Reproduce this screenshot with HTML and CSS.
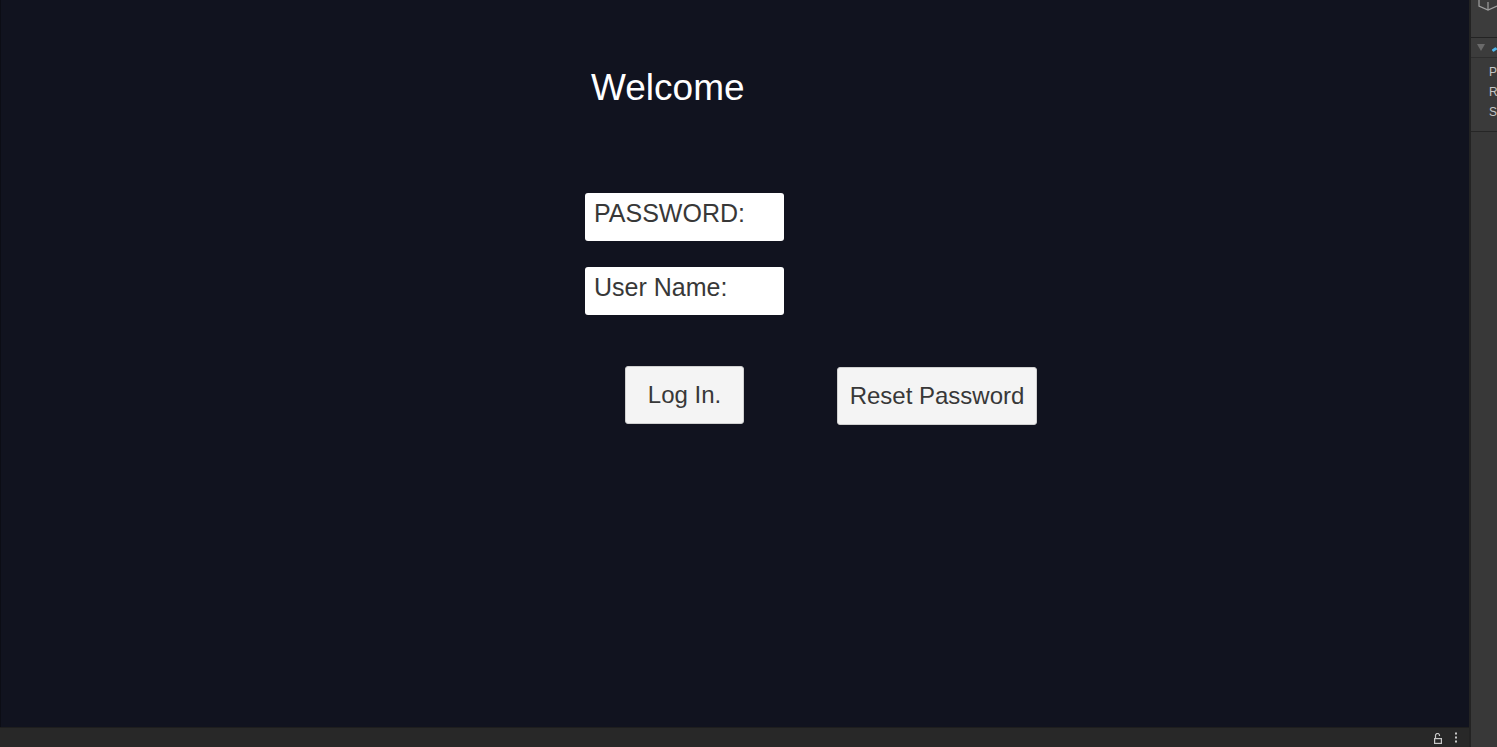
FILE: index.html
```html
<!DOCTYPE html>
<html lang="en">
<head>
<meta charset="utf-8">
<title>Login</title>
<link rel="stylesheet" href="styles.css">
</head>
<body>
<div class="app">
  <div class="workspace">
    <main class="scene">
      <div class="form">
        <h1 class="title">Welcome</h1>
        <div class="field field-first">PASSWORD:</div>
        <div class="field">User Name:</div>
        <div class="actions">
          <button class="btn btn-login">Log In.</button>
          <button class="btn btn-reset">Reset Password</button>
        </div>
      </div>
    </main>
    <footer class="statusbar">
      <svg class="lock" width="8" height="11" viewBox="0 0 8 11"><path d="M1.5 5.5 V2.5 A2 2 0 0 1 5.5 2.5 V3" fill="none" stroke="#c8c8c8" stroke-width="1.2"/><rect x="0.6" y="5.6" width="6.8" height="4.8" fill="none" stroke="#c8c8c8" stroke-width="1.2"/></svg>
      <svg class="dots" width="4" height="11" viewBox="0 0 4 11"><rect x="1" y="0.5" width="2" height="2" fill="#c8c8c8"/><rect x="1" y="4.5" width="2" height="2" fill="#c8c8c8"/><rect x="1" y="8.5" width="2" height="2" fill="#c8c8c8"/></svg>
    </footer>
  </div>
  <div class="divider"></div>
  <aside class="inspector">
    <div class="insp-head">
      <svg class="cube" width="30" height="12" viewBox="0 0 30 12"><path d="M8 -4 V6 L17 10 L26 6" fill="none" stroke="#a0a0a0" stroke-width="1.2"/><path d="M17 10 V2" fill="none" stroke="#a0a0a0" stroke-width="1.2"/></svg>
    </div>
    <div class="insp-component">
      <span class="tri"></span>
      <span class="comp-icon"></span>
    </div>
    <div class="insp-rows">
      <div class="row">P</div>
      <div class="row">R</div>
      <div class="row">S</div>
    </div>
    <div class="insp-rest"></div>
  </aside>
</div>
</body>
</html>
```

FILE: styles.css
```css
html, body {
  margin: 0;
  padding: 0;
  width: 1497px;
  height: 747px;
  overflow: hidden;
  background: #383838;
}

.app {
  display: flex;
  width: 1497px;
  height: 747px;
}

.workspace {
  width: 1469px;
  display: flex;
  flex-direction: column;
}

.scene {
  flex: 1;
  background: #11131f;
  border-left: 1px solid #0c0d15;
  box-sizing: border-box;
}

.form {
  padding-left: 584px;
  padding-top: 67px;
  display: flex;
  flex-direction: column;
  align-items: flex-start;
  font-family: "Liberation Sans", Arial, sans-serif;
}

.title {
  margin: 0 0 0 6px;
  font-size: 37px;
  line-height: 42px;
  font-weight: normal;
  color: #ffffff;
}

.field {
  width: 199px;
  height: 48px;
  box-sizing: border-box;
  background: #ffffff;
  border-radius: 3px;
  padding: 6px 0 0 9px;
  font-size: 25px;
  line-height: 28px;
  color: #383838;
  margin-top: 26px;
}

.field-first {
  margin-top: 84px;
}

.actions {
  display: flex;
  align-items: flex-start;
  margin-top: 51px;
  padding-left: 40px;
}

.btn {
  font-family: "Liberation Sans", Arial, sans-serif;
  font-size: 24px;
  color: #383838;
  background: #f4f4f4;
  border: 1px solid #d0d0d0;
  border-radius: 3px;
  height: 58px;
  padding: 0;
  box-sizing: border-box;
  display: flex;
  align-items: center;
  justify-content: center;
}

.btn-login {
  width: 119px;
}

.btn-reset {
  width: 200px;
  margin-left: 93px;
  margin-top: 1px;
}

.statusbar {
  height: 20px;
  background: #282828;
  border-top: 1px solid #1e1e1e;
  box-sizing: border-box;
  display: flex;
  align-items: center;
  justify-content: flex-end;
  gap: 12px;
  padding-right: 11px;
}

.lock {
  display: block;
  margin-top: 1px;
}

.dots {
  display: block;
}

.divider {
  width: 2px;
  background: #232323;
}

.inspector {
  flex: 1;
  display: flex;
  flex-direction: column;
  background: #3a3a3a;
  overflow: hidden;
  font-family: "Liberation Sans", Arial, sans-serif;
}

.insp-head {
  height: 37px;
  background: #3c3c3c;
  border-bottom: 1px solid #232323;
}

.cube {
  display: block;
}

.insp-component {
  height: 19px;
  border-bottom: 1px solid #2e2e2e;
  display: flex;
  align-items: center;
  padding-left: 6px;
  background: #3c3c3c;
}

.tri {
  width: 0;
  height: 0;
  border-left: 4px solid transparent;
  border-right: 4px solid transparent;
  border-top: 7px solid #6a6a6a;
}

.comp-icon {
  width: 8px;
  height: 3px;
  margin-left: 7px;
  margin-top: 4px;
  background: #4fb5ea;
  transform: rotate(-35deg);
  border-radius: 1px;
}

.insp-rows {
  padding: 4px 0 9px 18px;
  border-bottom: 1px solid #262626;
}

.row {
  font-size: 12px;
  line-height: 20px;
  color: #c4c4c4;
  white-space: nowrap;
}

.insp-rest {
  flex: 1;
  background: #383838;
}
```
